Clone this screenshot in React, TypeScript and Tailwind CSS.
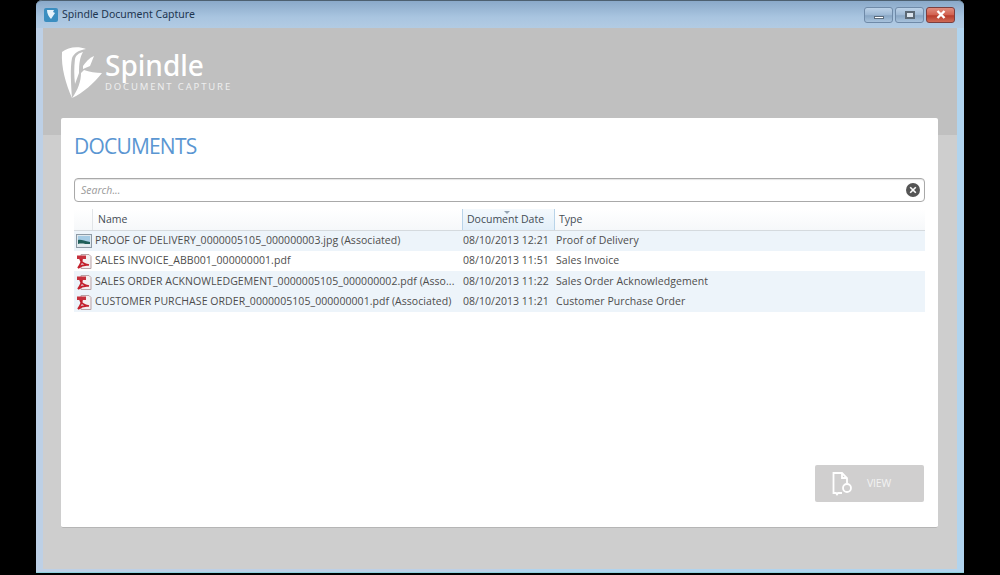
const rows = [
  { icon: "img", h: "h-[20px]", name: "PROOF OF DELIVERY_0000005105_000000003.jpg (Associated)", date: "08/10/2013 12:21", type: "Proof of Delivery", tint: true },
  { icon: "pdf", h: "h-[20px]", name: "SALES INVOICE_ABB001_000000001.pdf", date: "08/10/2013 11:51", type: "Sales Invoice", tint: false },
  { icon: "pdf", h: "h-[21px]", name: "SALES ORDER ACKNOWLEDGEMENT_0000005105_000000002.pdf (Asso...", date: "08/10/2013 11:22", type: "Sales Order Acknowledgement", tint: true },
  { icon: "pdf", h: "h-[20px]", name: "CUSTOMER PURCHASE ORDER_0000005105_000000001.pdf (Associated)", date: "08/10/2013 11:21", type: "Customer Purchase Order", tint: true },
];

function PdfIcon() {
  return (
    <svg width="16" height="16" viewBox="0 0 16 16" className="shrink-0">
      <path d="M5 1.5h8l2 2v12H5z" fill="#f4efef" stroke="#b9a2a6" strokeWidth="1" />
      <path d="M1 2.5h9v3.5H1z" fill="#c5303c" />
      <path d="M4 6c1 3 3 5 9 6-4-.5-8 .5-11 3 2-3 4-6 4-9" fill="none" stroke="#c3202c" strokeWidth="1.7" />
    </svg>
  );
}

function ImgIcon() {
  return (
    <svg width="16" height="14" viewBox="0 0 16 14" className="shrink-0">
      <rect x="0.5" y="0.5" width="15" height="13" fill="#dfe8ee" stroke="#8d9aa5" />
      <rect x="2" y="2" width="12" height="6" fill="#a5cbe4" />
      <path d="M2 6c3-1 6 1 12 2v2H2z" fill="#1f5f5a" />
      <path d="M2 10c4-1 7 0 12 1v1H2z" fill="#e6edf0" />
    </svg>
  );
}

function Logo() {
  return (
    <svg width="42" height="54" viewBox="0 0 42 54" className="shrink-0">
      <path d="M1 6C7 1 17 0 25 3C18 4 13 7 11 12C9 22 10 38 11 52C5 38 0 22 1 6z" fill="#fff" />
      <path d="M14 13C15 9 18 7 22 6C19 11 18 17 18 27L14 38C13 30 13 21 14 13z" fill="#fff" />
      <path d="M22 20C25 16 28 12 33 10L29 20L22 23z" fill="#fff" />
      <path d="M20 27L23 24C28 26 35 27 41 27C33 37 22 47 11 52C17 44 20 35 20 27z" fill="#fff" />
    </svg>
  );
}

export default function App() {
  return (
    <div className="w-[1000px] h-[575px] bg-black flex justify-center overflow-hidden font-['Open_Sans',sans-serif]">
      <div className="w-[928px] h-[573px] flex flex-col bg-[linear-gradient(90deg,#bdd0e6_50%,#b1d4ee_50%)] rounded-t-md border-b border-[#8fd0dc]">
        <div className="h-[28px] flex items-center pl-[8px] pr-[9px] bg-[linear-gradient(#8aa9c9,#a9c5e0_60%,#b2cbe3)] border-t border-[#4d6070] rounded-t-md">
          <div className="w-[14px] h-[14px] rounded-[2px] bg-[#3b8ec0] flex items-center justify-center">
            <svg width="10" height="11" viewBox="0 0 10 11">
              <path d="M1 1h7L7 3l2 1-4 6C3 8 1 5 1 1z" fill="#e6f3fb" />
            </svg>
          </div>
          <span className="ml-[4px] text-[10.5px] text-[#1d3550] font-['Noto_Sans',sans-serif]">Spindle Document Capture</span>
          <div className="ml-auto flex gap-[2px]">
            <div className="w-[29px] h-[16px] rounded-[3px] border border-[#6f8aa8] bg-[linear-gradient(#bcd2e8,#9db8d4_50%,#88a6c4_55%,#a8c2dc)] flex items-end justify-center pb-[3px]">
              <div className="w-[10px] h-[3px] bg-white border border-[#5b6b7c]" />
            </div>
            <div className="w-[29px] h-[16px] rounded-[3px] border border-[#6f8aa8] bg-[linear-gradient(#bcd2e8,#9db8d4_50%,#88a6c4_55%,#a8c2dc)] flex items-center justify-center">
              <div className="w-[10px] h-[8px] bg-[#dbe5ef] border-2 border-[#5a6875]" />
            </div>
            <div className="w-[29px] h-[16px] rounded-[3px] border border-[#7c3f3f] bg-[linear-gradient(#e08d7e,#d2604f_50%,#b83c2c_55%,#cf6a55)] flex items-center justify-center">
              <svg width="10" height="9" viewBox="0 0 10 9">
                <path d="M1.5 1l7 7M8.5 1l-7 7" stroke="#fff" strokeWidth="2.4" />
              </svg>
            </div>
          </div>
        </div>
        <div className="flex-1 mx-[7px] mb-[3px] flex flex-col px-[18px] bg-[linear-gradient(#c0c0c0_107px,#cecece_107px)]">
          <div className="h-[90px] flex items-start pt-[18px] shrink-0">
            <div className="flex gap-[2px]">
              <Logo />
              <div className="flex flex-col pt-[5px]">
                <span className="text-[28px] leading-[28px] font-medium text-white font-['Noto_Sans',sans-serif]">Spindle</span>
                <span className="mt-[2px] text-[9.5px] leading-[12px] tracking-[1.85px] text-[#eeeeee] font-['Noto_Sans',sans-serif]">DOCUMENT CAPTURE</span>
              </div>
            </div>
          </div>
          <div className="w-[877px] h-[410px] bg-white rounded-[2px] border-b border-[#b5b5b5] flex flex-col px-[13px]">
            <h1 className="mt-[14px] h-[28px] leading-[28px] text-[21px] text-[#5a96d2] font-normal tracking-[-0.8px] font-['Open_Sans',sans-serif]">DOCUMENTS</h1>
            <div className="mt-[18px] h-[24px] rounded-[4px] border border-[#a9a9a9] flex items-center pl-[6px] pr-[4px] shadow-[inset_0_1px_1px_#e4e4e4]">
              <span className="italic text-[10.5px] text-[#9a9a9a] pt-[1px]">Search...</span>
              <div className="ml-auto w-[14px] h-[14px] rounded-full bg-[#555555] flex items-center justify-center">
                <svg width="8" height="8" viewBox="0 0 8 8">
                  <path d="M1.2 1.2l5.6 5.6M6.8 1.2L1.2 6.8" stroke="#fff" strokeWidth="1.6" />
                </svg>
              </div>
            </div>
            <div className="mt-[7px] h-[22px] flex items-stretch border-b border-[#d5dade] text-[10.5px] text-[#444c55] bg-[linear-gradient(#ffffff,#f6f8fa)]">
              <div className="w-[19px] border-r border-[#e2e5e8]" />
              <div className="w-[369px] pl-[5px] flex items-center">Name</div>
              <div className="w-[93px] bg-[linear-gradient(#f4f9fd,#e2eff9)] border-x border-[#b9d4e9] pl-[4px] flex items-center relative">
                Document Date
                <div className="absolute top-[2px] left-[41px] w-0 h-0 border-x-[3px] border-x-transparent border-t-[3px] border-t-[#94a3b2]" />
              </div>
              <div className="pl-[4px] flex items-center">Type</div>
            </div>
            <div className="flex flex-col text-[10.5px] text-[#4d4d4d]">
              {rows.map((r) => (
                <div key={r.name} className={`${r.h} flex items-center ${r.tint ? "bg-[#edf4fa]" : "bg-white"}`}>
                  <div className="w-[21px] pl-[2px] flex items-center">
                    {r.icon === "pdf" ? <PdfIcon /> : <ImgIcon />}
                  </div>
                  <div className="w-[368px] pr-[2px] whitespace-nowrap overflow-hidden tracking-[0.06px]">{r.name}</div>
                  <div className="w-[93px] whitespace-nowrap tracking-[0.03px]">{r.date}</div>
                  <div className="whitespace-nowrap tracking-[0.07px]">{r.type}</div>
                </div>
              ))}
            </div>
            <div className="mt-auto mb-[25px] mr-[1px] self-end w-[109px] h-[37px] bg-[#d0cfcf] rounded-[2px] flex items-center pl-[17px]">
              <svg width="21" height="26" viewBox="0 0 21 26" fill="none" stroke="#fff" strokeWidth="1.8">
                <path d="M10 22H6l-1 1.5L4 22H1.5V2H10l5 5v5" />
                <path d="M10 2v5h5" />
                <circle cx="15" cy="17" r="4" />
              </svg>
              <span className="ml-[14px] text-[10.5px] text-[#f2f2f2] tracking-[-0.2px]">VIEW</span>
            </div>
          </div>
        </div>
      </div>
    </div>
  );
}
